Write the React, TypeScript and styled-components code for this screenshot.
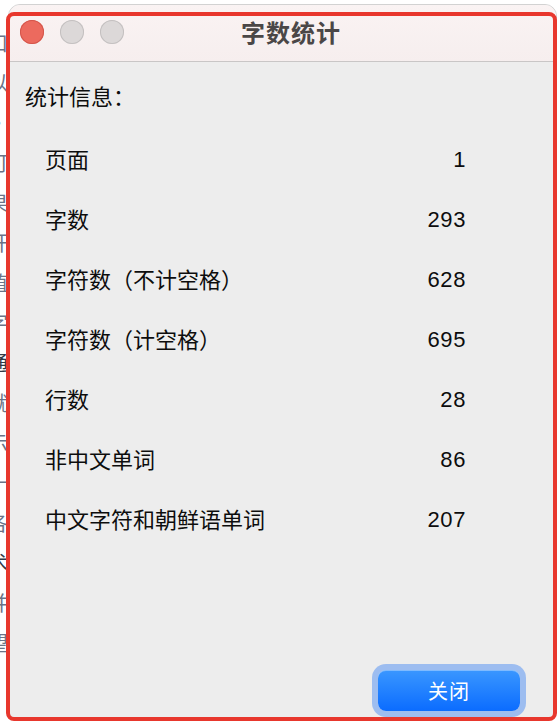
import React from 'react';
import styled, { createGlobalStyle } from 'styled-components';

const GlobalStyle = createGlobalStyle`
  html, body {
    margin: 0;
    padding: 0;
    background: #ffffff;
  }
  body {
    width: 559px;
    height: 723px;
    overflow: hidden;
    font-family: 'Liberation Sans', 'Noto Sans CJK SC', sans-serif;
  }
`;

const Stage = styled.div`
  position: relative;
  display: flex;
  width: 559px;
  height: 723px;
  padding-top: 4px;
  box-sizing: border-box;
  background: #ffffff;
`;

// the document behind the dialog, only a sliver of it shows on the left
const BehindStrip = styled.div`
  width: 8px;
  overflow: hidden;
  display: flex;
  flex-direction: column;
  padding-top: 28px;
  gap: 18px;
`;

const BehindChar = styled.span<{ $dark?: boolean }>`
  margin-left: -12px;
  font-size: 20px;
  line-height: 22px;
  color: ${(p) => (p.$dark ? '#333a48' : '#6a7488')};
  font-family: 'Noto Sans CJK SC', sans-serif;
`;

const Window = styled.div`
  width: 549px;
  height: 717px;
  display: flex;
  flex-direction: column;
  background: #ededed;
  border: 1px solid #d2d2d2;
  border-radius: 12px;
  box-sizing: border-box;
  overflow: hidden;
`;

const TitleBar = styled.div`
  height: 57px;
  flex-shrink: 0;
  display: grid;
  grid-template-columns: 1fr auto 1fr;
  align-items: center;
  padding-left: 11px;
  padding-bottom: 2px;
  background: linear-gradient(#faf3f3, #f6eeee);
  border-bottom: 1px solid #c9c6c6;
  box-sizing: border-box;
`;

const Lights = styled.div`
  display: flex;
  gap: 16px;
`;

const Light = styled.span<{ $color: string; $edge: string }>`
  width: 24px;
  height: 24px;
  border-radius: 50%;
  background: ${(p) => p.$color};
  box-shadow: inset 0 0 0 1px ${(p) => p.$edge};
`;

const Title = styled.div`
  font-family: 'Noto Sans CJK SC', sans-serif;
  font-size: 24px;
  line-height: 28px;
  font-weight: 700;
  color: #4a4747;
  letter-spacing: 1px;
  padding-left: 6px;
`;

const Body = styled.div`
  flex: 1;
  display: flex;
  flex-direction: column;
  padding: 21px 0 0 16px;
`;

const Heading = styled.div`
  font-size: 22px;
  line-height: 30px;
  color: #0d0d0d;
`;

const StatList = styled.div`
  display: flex;
  flex-direction: column;
  width: 421px;
  margin: 15px 0 0 20px;
`;

const StatRow = styled.div`
  height: 60px;
  display: flex;
  align-items: center;
  justify-content: space-between;
  font-size: 22px;
  color: #0d0d0d;
`;

const StatValue = styled.span`
  font-size: 22px;
  letter-spacing: 0.6px;
  padding-top: 3px;
`;

const Footer = styled.div`
  display: flex;
  justify-content: flex-end;
  padding: 0 36px 9px 0;
`;

const Button = styled.button`
  width: 142px;
  height: 41px;
  border: none;
  border-radius: 8px;
  background: linear-gradient(#3a97ff, #0b6cff);
  box-shadow: 0 0 0 6px #9dbdf0, inset 0 1px 0 rgba(255, 255, 255, 0.35);
  color: #ffffff;
  font-family: 'Noto Sans CJK SC', sans-serif;
  font-size: 20px;
  letter-spacing: 1px;
  cursor: pointer;
`;

// red annotation rectangle drawn over the screenshot
const Highlight = styled.div`
  position: absolute;
  left: 6px;
  top: 12px;
  width: 551px;
  height: 709px;
  border: 4px solid #e8372d;
  border-radius: 8px;
  box-sizing: border-box;
  pointer-events: none;
`;

const stats = [
  { label: '页面', value: 1 },
  { label: '字数', value: 293 },
  { label: '字符数（不计空格）', value: 628 },
  { label: '字符数（计空格）', value: 695 },
  { label: '行数', value: 28 },
  { label: '非中文单词', value: 86 },
  { label: '中文字符和朝鲜语单词', value: 207 },
];

const behind = ['口', '以', '·', '可', '果', '开', '值', '字', '通', '就', '示', '十', '各', '术', '并', '望'];

export default function App() {
  return (
    <>
      <GlobalStyle />
      <Stage>
        <BehindStrip>
          {behind.map((c, i) => (
            <BehindChar key={i} $dark={i === 8 || i === 13}>
              {c}
            </BehindChar>
          ))}
        </BehindStrip>
        <Window>
          <TitleBar>
            <Lights>
              <Light $color="#ec6a5e" $edge="#d4564b" />
              <Light $color="#dcd8d8" $edge="#c4c0c0" />
              <Light $color="#dcd8d8" $edge="#c4c0c0" />
            </Lights>
            <Title>字数统计</Title>
            <span />
          </TitleBar>
          <Body>
            <Heading>统计信息：</Heading>
            <StatList>
              {stats.map((s) => (
                <StatRow key={s.label}>
                  <span>{s.label}</span>
                  <StatValue>{s.value}</StatValue>
                </StatRow>
              ))}
            </StatList>
          </Body>
          <Footer>
            <Button>关闭</Button>
          </Footer>
        </Window>
        <Highlight />
      </Stage>
    </>
  );
}
